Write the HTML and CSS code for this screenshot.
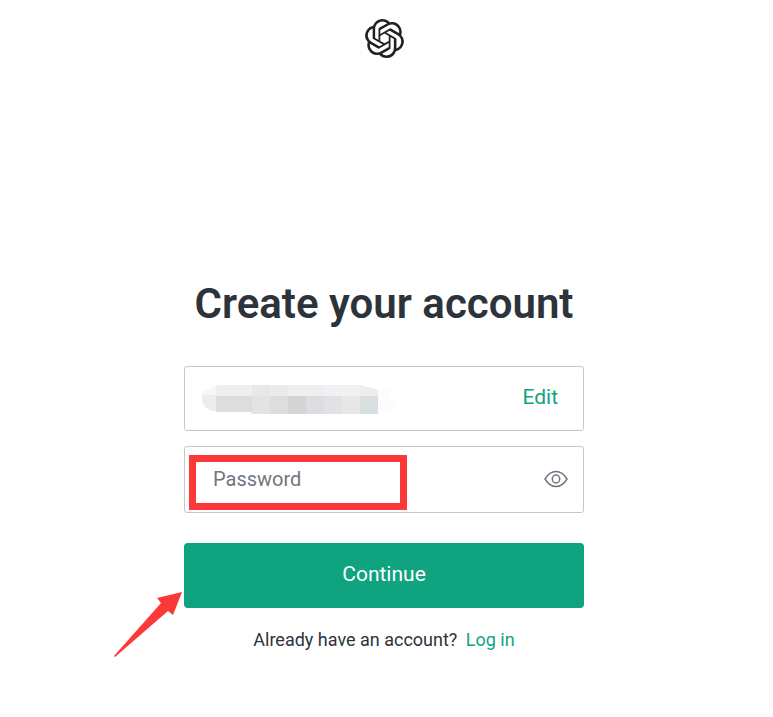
FILE: index.html
```
<!DOCTYPE html>
<html lang="en">
<head>
<meta charset="utf-8">
<meta name="viewport" content="width=device-width, initial-scale=1">
<title>Create your account</title>
<link rel="stylesheet" href="styles.css">
</head>
<body>

<header class="header">
  <svg class="logo" viewBox="0 0 24 24" role="img" aria-label="OpenAI">
    <path fill="currentColor" d="M22.2819 9.8211a5.9847 5.9847 0 0 0-.5157-4.9108 6.0462 6.0462 0 0 0-6.5098-2.9A6.0651 6.0651 0 0 0 4.9807 4.1818a5.9847 5.9847 0 0 0-3.9977 2.9 6.0462 6.0462 0 0 0 .7427 7.0966 5.98 5.98 0 0 0 .511 4.9107 6.051 6.051 0 0 0 6.5146 2.9001A5.9847 5.9847 0 0 0 13.2599 24a6.0557 6.0557 0 0 0 5.7718-4.2058 5.9894 5.9894 0 0 0 3.9977-2.9001 6.0557 6.0557 0 0 0-.7475-7.0729zm-9.022 12.6081a4.4755 4.4755 0 0 1-2.8764-1.0408l.1419-.0804 4.7783-2.7582a.7948.7948 0 0 0 .3927-.6813v-6.7369l2.02 1.1686a.071.071 0 0 1 .038.052v5.5826a4.504 4.504 0 0 1-4.4945 4.4944zm-9.6607-4.1254a4.4708 4.4708 0 0 1-.5346-3.0137l.142.0852 4.783 2.7582a.7712.7712 0 0 0 .7806 0l5.8428-3.3685v2.3324a.0804.0804 0 0 1-.0332.0615L9.74 19.9502a4.4992 4.4992 0 0 1-6.1408-1.6464zM2.3408 7.8956a4.485 4.485 0 0 1 2.3655-1.9728V11.6a.7664.7664 0 0 0 .3879.6765l5.8144 3.3543-2.0201 1.1685a.0757.0757 0 0 1-.071 0l-4.8303-2.7865A4.504 4.504 0 0 1 2.3408 7.872zm16.5963 3.8558L13.1038 8.364 15.1192 7.2a.0757.0757 0 0 1 .071 0l4.8303 2.7913a4.4944 4.4944 0 0 1-.6765 8.1042v-5.6772a.79.79 0 0 0-.407-.667zm2.0107-3.0231l-.142-.0852-4.7735-2.7818a.7759.7759 0 0 0-.7854 0L9.409 9.2297V6.8974a.0662.0662 0 0 1 .0284-.0615l4.8303-2.7866a4.4992 4.4992 0 0 1 6.6802 4.66zM8.3065 12.863l-2.02-1.1638a.0804.0804 0 0 1-.038-.0567V6.0742a4.4992 4.4992 0 0 1 7.3757-3.4537l-.142.0805L8.704 5.459a.7948.7948 0 0 0-.3927.6813zm1.0976-2.3654l2.602-1.4998 2.6069 1.4998v2.9994l-2.5974 1.4997-2.6067-1.4997Z"/>
  </svg>
</header>

<main class="main">
  <h1 class="title">Create your account</h1>

  <form class="form">
    <div class="field">
      <svg class="hidden-email" viewBox="0 0 192 30" role="img" aria-label="Email address hidden">
        <path fill="#fcfcfc" d="M176 5h12v11l4 3v6l-5 4h-11l-70 1v-8z"/>
        <path fill="#f7f7f8" d="M0 12V7l6-1 5-4 3-1v10z"/>
        <path fill="#ededef" d="M0 11h14v16H9l-6-4-3-6z"/>
        <path fill="#eef0ef" d="M14 2l2-1h34v11H14z"/>
        <path fill="#e8e8e8" d="M50 1h18v11H50z"/>
        <path fill="#ebebed" d="M68 1h18v11H68z"/>
        <path fill="#eef0ef" d="M86 1h36v11H86z"/>
        <path fill="#f1f1f4" d="M122 1h36v11h-36z"/>
        <path fill="#ededef" d="M158 1l8 2 7 2 3 2v5h-18z"/>
        <path fill="#dbdedc" d="M14 12h36v17l-2-1H14z"/>
        <path fill="#e1e3e5" d="M50 12h18v18H50z"/>
        <path fill="#dbdedc" d="M68 12h18v18H68z"/>
        <path fill="#d5d5d5" d="M86 12h18v18H86z"/>
        <path fill="#dcdde0" d="M104 12h18v18h-18z"/>
        <path fill="#e1e2e5" d="M122 12h18v18h-18z"/>
        <path fill="#e7e7e7" d="M140 12h18v18h-18z"/>
        <path fill="#d9dee1" d="M158 12h18v18h-18z"/>
      </svg>
      <a class="edit" href="#">Edit</a>
    </div>

    <div class="field field-password">
      <input class="password" type="password" placeholder="Password" aria-label="Password">
      <button class="show" type="button" aria-label="Show password">
        <svg class="eye" viewBox="0 0 24 18" fill="none" stroke="currentColor" stroke-width="1.5">
          <path d="M1 9C4 4 7.500 1.500 12 1.500S20 4 23 9c-3 5-6.500 7.500-11 7.500S4 14 1 9z"/>
          <ellipse cx="12" cy="9" rx="3.700" ry="4"/>
        </svg>
      </button>
      <span class="highlight"></span>
    </div>

    <div class="submit">
      <button class="continue" type="submit">Continue</button>
      <svg class="arrow" viewBox="0 0 70 68" aria-hidden="true">
        <path fill="#fc3939" d="M68 1L59 24l-5-4L1 66l-1-1L47 12l-4-5z"/>
      </svg>
    </div>
  </form>

  <p class="login">Already have an account? <a class="login-link" href="#">Log in</a></p>
</main>

</body>
</html>
```

FILE: styles.css
```
* {
  box-sizing: border-box;
}

body {
  margin: 0;
  padding: 19px 5px 19px 0;
  background: #fff;
  color: #2d333a;
  font-family: Roboto, "Liberation Sans", sans-serif;
  font-size: 21px;
}

a {
  color: #10a37f;
  text-decoration: none;
}

.header {
  display: flex;
  justify-content: center;
}

.logo {
  width: 39px;
  height: 39px;
  color: #202123;
}

.main {
  max-width: 400px;
  margin: 222px auto 0;
}

.title {
  margin: 0 0 38px;
  font-size: 42px;
  font-weight: 600;
  line-height: 48px;
  text-align: center;
  white-space: nowrap;
}

.field {
  position: relative;
  display: flex;
  align-items: center;
  justify-content: space-between;
  height: 65px;
  padding: 0 15px 0 17px;
  border: 1px solid #c2c8d0;
  border-radius: 3px;
}

.field-password {
  height: 67px;
  margin-top: 15px;
  padding: 0 15px 2px 28px;
}

.hidden-email {
  width: 192px;
  height: 30px;
}

.edit {
  padding: 0 10px 4px 0;
}

.password {
  flex: 1;
  min-width: 0;
  padding: 0;
  border: 0;
  outline: 0;
  background: none;
  color: #2d333a;
  font: inherit;
  font-size: 20px;
}

.password::placeholder {
  color: #6f7780;
}

.show {
  display: flex;
  padding: 0;
  border: 0;
  background: none;
  color: #6e7780;
  cursor: pointer;
}

.eye {
  width: 24px;
  height: 18px;
}

/* red marker round the password box */
.highlight {
  position: absolute;
  top: 8px;
  left: 4px;
  width: 218px;
  height: 55px;
  border: 7px solid #fc3939;
  pointer-events: none;
}

.submit {
  position: relative;
  margin-top: 30px;
}

.continue {
  display: block;
  width: 100%;
  height: 65px;
  padding: 0 0 4px;
  border: 0;
  border-radius: 4px;
  background: #10a37f;
  color: #fff;
  font: inherit;
  cursor: pointer;
}

.arrow {
  position: absolute;
  top: 48px;
  left: -70px;
  width: 70px;
  height: 68px;
}

.login {
  margin: 20px 0 0;
  font-size: 18px;
  line-height: 24px;
  text-align: center;
}

.login-link {
  margin-left: 4px;
}
```
